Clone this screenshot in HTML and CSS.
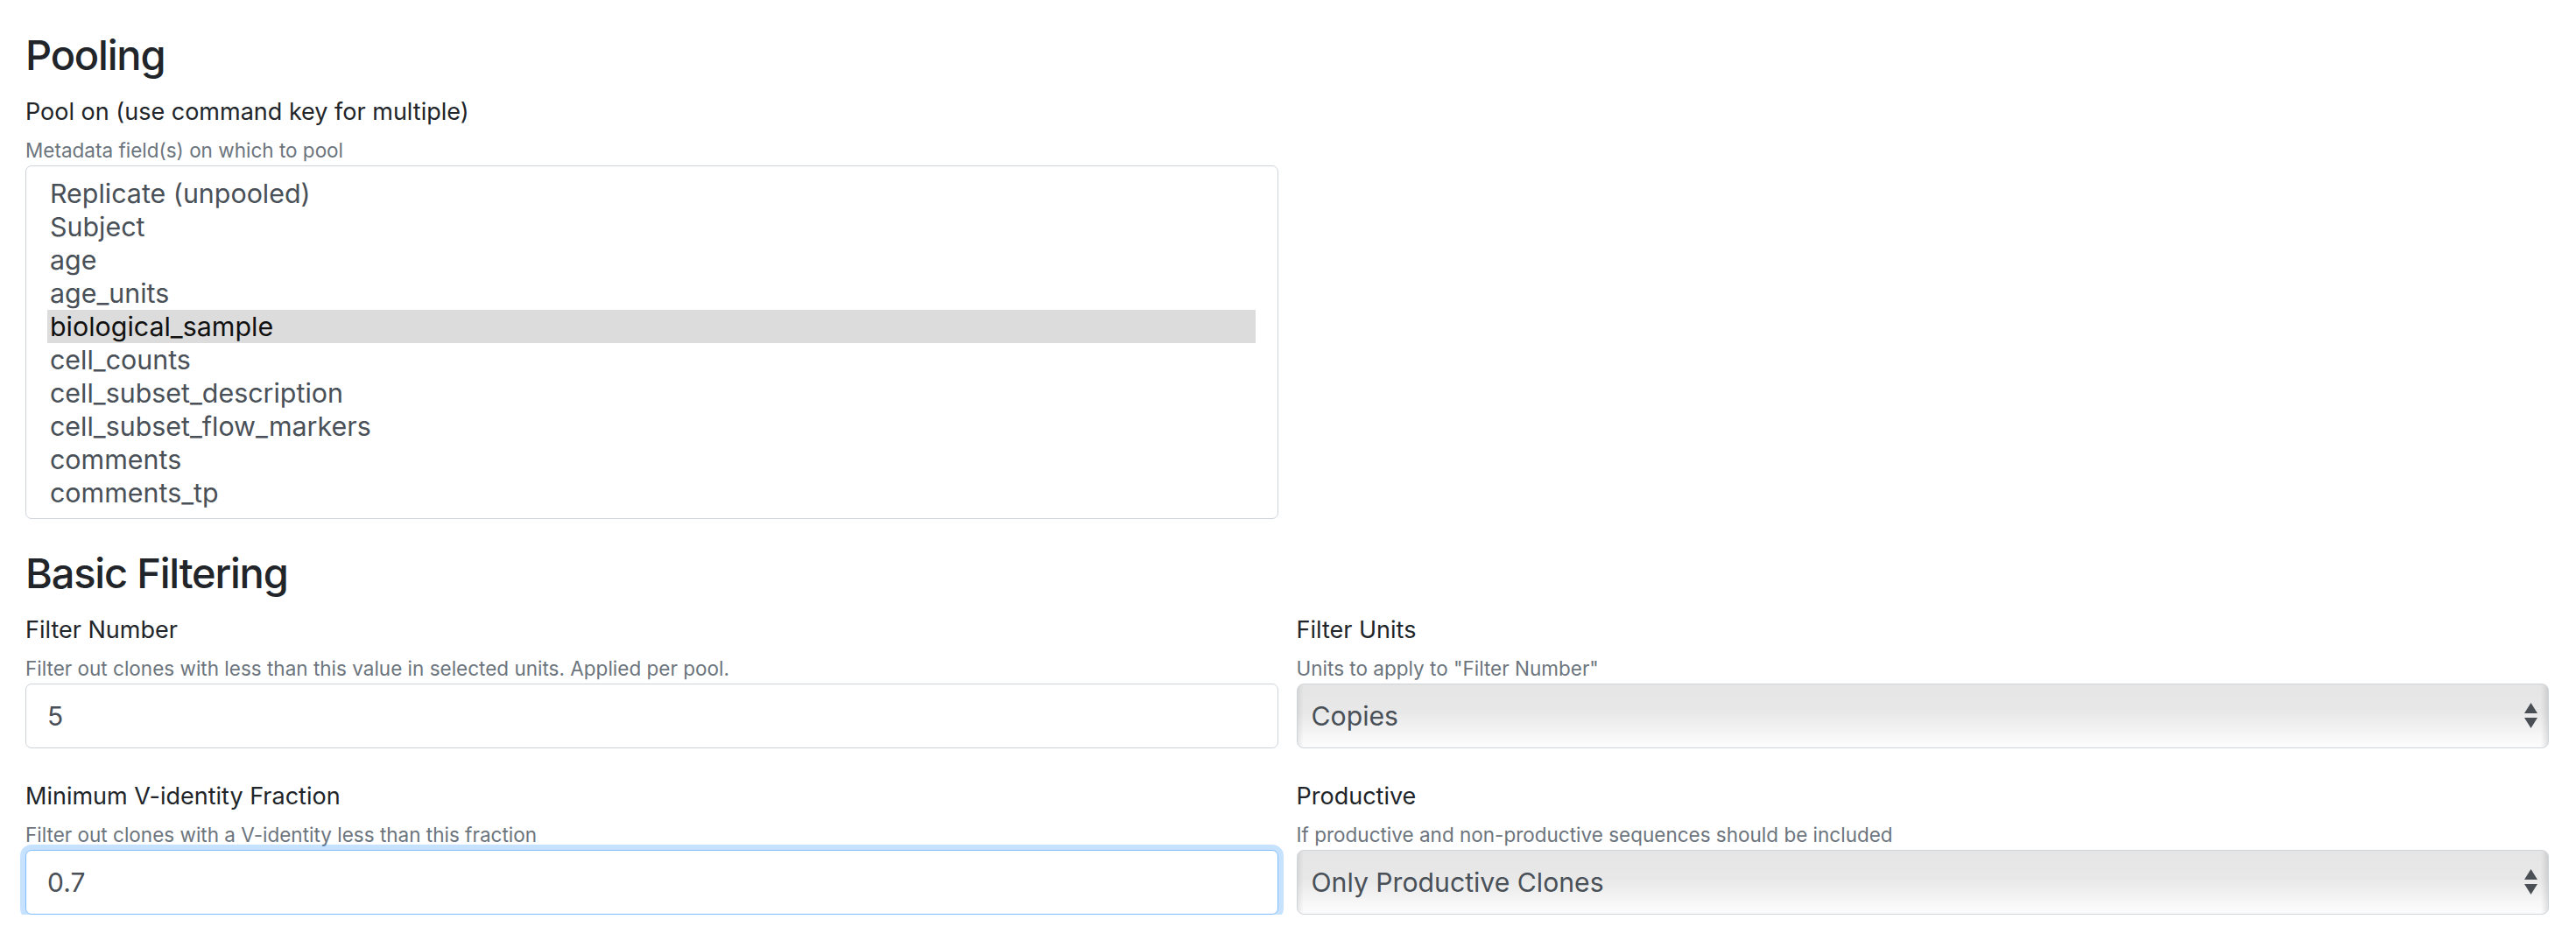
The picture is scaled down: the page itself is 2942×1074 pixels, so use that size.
FILE: index.html
```html
<!DOCTYPE html>
<html lang="en">
<head>
<meta charset="utf-8">
<title>Pooling and Filtering</title>
<link rel="stylesheet" href="styles.css">
</head>
<body>
<div class="page">
  <section class="section">
    <h3 class="section-title">Pooling</h3>
    <div class="grid">
      <div class="form-group">
        <label class="field-label">Pool on (use command key for multiple)</label>
        <small class="help">Metadata field(s) on which to pool</small>
        <div class="listbox" role="listbox" aria-multiselectable="true">
          <div class="option">Replicate (unpooled)</div>
          <div class="option">Subject</div>
          <div class="option">age</div>
          <div class="option">age_units</div>
          <div class="option selected">biological_sample</div>
          <div class="option">cell_counts</div>
          <div class="option">cell_subset_description</div>
          <div class="option">cell_subset_flow_markers</div>
          <div class="option">comments</div>
          <div class="option">comments_tp</div>
        </div>
      </div>
    </div>
  </section>

  <section class="section">
    <h3 class="section-title">Basic Filtering</h3>
    <div class="grid">
      <div class="form-group">
        <label class="field-label">Filter Number</label>
        <small class="help">Filter out clones with less than this value in selected units. Applied per pool.</small>
        <div class="text-input">5</div>
      </div>
      <div class="form-group">
        <label class="field-label">Filter Units</label>
        <small class="help">Units to apply to "Filter Number"</small>
        <div class="select">
          <span class="select-value">Copies</span>
          <svg class="select-arrows" width="15" height="30" viewBox="0 0 15 30"><polygon points="7.5,0 15,12 0,12"/><polygon points="0,17 15,17 7.5,29"/></svg>
        </div>
      </div>
      <div class="form-group">
        <label class="field-label">Minimum V-identity Fraction</label>
        <small class="help">Filter out clones with a V-identity less than this fraction</small>
        <div class="text-input focused">0.7</div>
      </div>
      <div class="form-group">
        <label class="field-label">Productive</label>
        <small class="help">If productive and non-productive sequences should be included</small>
        <div class="select">
          <span class="select-value">Only Productive Clones</span>
          <svg class="select-arrows" width="15" height="30" viewBox="0 0 15 30"><polygon points="7.5,0 15,12 0,12"/><polygon points="0,17 15,17 7.5,29"/></svg>
        </div>
      </div>
    </div>
  </section>
</div>
</body>
</html>
```
FILE: styles.css
```css
html, body {
  margin: 0;
  padding: 0;
  background: #ffffff;
}

body {
  font-family: "Inter", "Liberation Sans", sans-serif;
  color: #212529;
}

.page {
  padding: 35px 31px 0 29px;
}

.section + .section {
  margin-top: 34px;
}

.section-title {
  margin: 0 0 17px 0;
  font-size: 47px;
  line-height: 56px;
  font-weight: 500;
  letter-spacing: -1.2px;
  color: #212529;
}

.grid {
  display: grid;
  grid-template-columns: 1fr 1fr;
  column-gap: 21px;
  row-gap: 35px;
}

.form-group {
  display: flex;
  flex-direction: column;
  min-width: 0;
}

.field-label {
  display: block;
  font-size: 27px;
  line-height: 40px;
  margin-bottom: 7px;
  color: #212529;
}

.help {
  display: block;
  font-size: 22.5px;
  line-height: 34px;
  color: #6c757d;
}

.listbox {
  box-sizing: border-box;
  height: 404px;
  border: 1px solid #ced4da;
  border-radius: 7px;
  padding: 12px 25px 10px 24px;
  overflow: hidden;
  background: #fff;
}

.option {
  height: 38px;
  line-height: 38px;
  padding-left: 3px;
  font-size: 30.4px;
  color: #495057;
  white-space: nowrap;
}

.option.selected {
  background: #dcdcdc;
  color: #111;
}

.text-input {
  box-sizing: border-box;
  height: 74px;
  border: 1px solid #ced4da;
  border-radius: 7px;
  padding: 0 24px;
  display: flex;
  align-items: center;
  font-size: 30px;
  color: #495057;
  background: #fff;
}

.text-input.focused {
  border-color: #80bdff;
  box-shadow: 0 0 0 6px rgba(0, 123, 255, 0.22);
}

.select {
  box-sizing: border-box;
  height: 74px;
  border: 1.5px solid #cfd4d9;
  border-radius: 8px;
  padding: 0 12px 0 16px;
  display: flex;
  align-items: center;
  justify-content: space-between;
  background:
    linear-gradient(to right, rgba(0,0,0,0.07) 0, rgba(0,0,0,0) 7px, rgba(0,0,0,0) calc(100% - 8px), rgba(0,0,0,0.10) 100%),
    linear-gradient(to bottom, #e5e5e5 0%, #e8e8e8 45%, #f1f1f1 68%, #f9f9f9 88%, #fcfcfc 100%);
}

.select-value {
  font-size: 30.2px;
  color: #495057;
}

.select-arrows {
  fill: #4a4f55;
  flex: none;
}
```
